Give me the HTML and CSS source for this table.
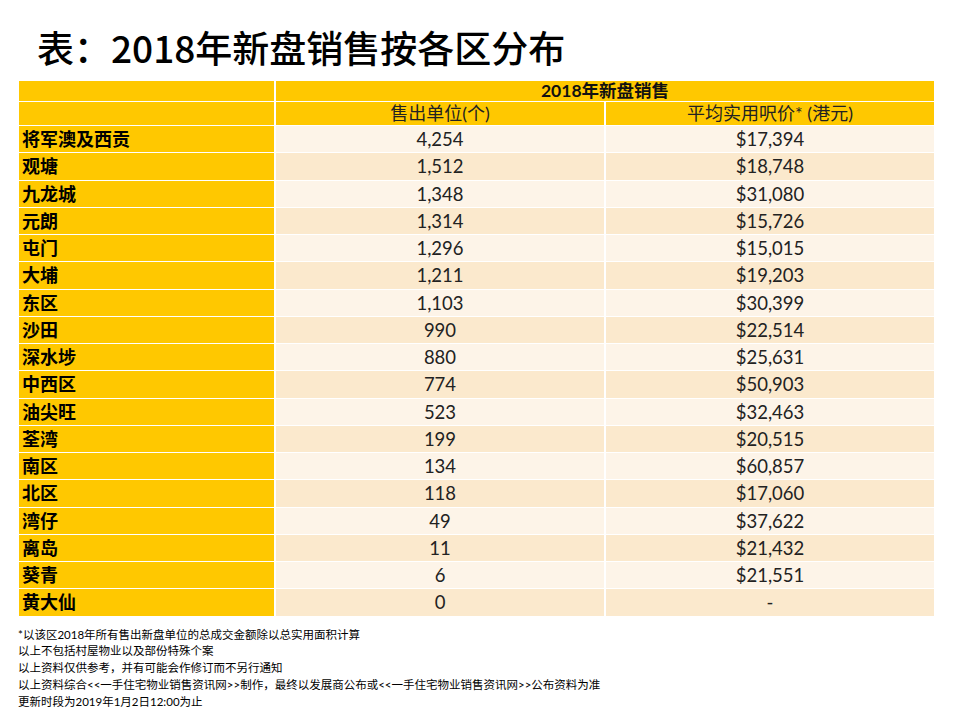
FILE: index.html
```html
<!DOCTYPE html>
<html lang="zh-CN">
<head>
<meta charset="utf-8">
<title>表：2018年新盘销售按各区分布</title>
<link rel="stylesheet" href="styles.css">
</head>
<body>
<div class="page">
  <h1 class="title">表：2018年新盘销售按各区分布</h1>
  <div class="table">
    <div class="hcell"></div>
    <div class="hcell span2 bold">2018年新盘销售</div>
    <div class="hcell"></div>
    <div class="hcell">售出单位(个)</div>
    <div class="hcell">平均实用呎价* (港元)</div>

    <div class="row"><div class="name">将军澳及西贡</div><div class="val">4,254</div><div class="val">$17,394</div></div>
    <div class="row alt"><div class="name">观塘</div><div class="val">1,512</div><div class="val">$18,748</div></div>
    <div class="row"><div class="name">九龙城</div><div class="val">1,348</div><div class="val">$31,080</div></div>
    <div class="row alt"><div class="name">元朗</div><div class="val">1,314</div><div class="val">$15,726</div></div>
    <div class="row"><div class="name">屯门</div><div class="val">1,296</div><div class="val">$15,015</div></div>
    <div class="row alt"><div class="name">大埔</div><div class="val">1,211</div><div class="val">$19,203</div></div>
    <div class="row"><div class="name">东区</div><div class="val">1,103</div><div class="val">$30,399</div></div>
    <div class="row alt"><div class="name">沙田</div><div class="val">990</div><div class="val">$22,514</div></div>
    <div class="row"><div class="name">深水埗</div><div class="val">880</div><div class="val">$25,631</div></div>
    <div class="row alt"><div class="name">中西区</div><div class="val">774</div><div class="val">$50,903</div></div>
    <div class="row"><div class="name">油尖旺</div><div class="val">523</div><div class="val">$32,463</div></div>
    <div class="row alt"><div class="name">荃湾</div><div class="val">199</div><div class="val">$20,515</div></div>
    <div class="row"><div class="name">南区</div><div class="val">134</div><div class="val">$60,857</div></div>
    <div class="row alt"><div class="name">北区</div><div class="val">118</div><div class="val">$17,060</div></div>
    <div class="row"><div class="name">湾仔</div><div class="val">49</div><div class="val">$37,622</div></div>
    <div class="row alt"><div class="name">离岛</div><div class="val">11</div><div class="val">$21,432</div></div>
    <div class="row"><div class="name">葵青</div><div class="val">6</div><div class="val">$21,551</div></div>
    <div class="row alt"><div class="name">黄大仙</div><div class="val">0</div><div class="val">-</div></div>
  </div>
  <div class="notes">
    <p>*以该区2018年所有售出新盘单位的总成交金额除以总实用面积计算</p>
    <p>以上不包括村屋物业以及部份特殊个案</p>
    <p>以上资料仅供参考，并有可能会作修订而不另行通知</p>
    <p>以上资料综合&lt;&lt;一手住宅物业销售资讯网&gt;&gt;制作，最终以发展商公布或&lt;&lt;一手住宅物业销售资讯网&gt;&gt;公布资料为准</p>
    <p>更新时段为2019年1月2日12:00为止</p>
  </div>
</div>
</body>
</html>
```

FILE: styles.css
```css
html, body {
  margin: 0;
  padding: 0;
  background: #ffffff;
}

body {
  font-family: "Noto Sans CJK SC", "Noto Sans", sans-serif;
  color: #000;
}

.page {
  width: 960px;
  height: 720px;
  padding: 25px 0 0 19px;
  box-sizing: border-box;
}

.title {
  margin: 0 0 12px 18px;
  font-size: 37px;
  line-height: 44px;
  font-weight: 500;
  color: #000;
}

.table {
  display: grid;
  grid-template-columns: 255px 328px 328px;
  grid-template-rows: 20px 23px repeat(18, 26.25px);
  column-gap: 2px;
  row-gap: 1px;
  width: 915px;
}

.hcell {
  background: #ffc800;
  font-family: "Lato", "Noto Sans CJK SC", sans-serif;
  font-size: 18px;
  line-height: 23px;
  text-align: center;
  color: #222;
  white-space: nowrap;
}

.hcell.span2 {
  grid-column: span 2;
}

.hcell.bold {
  font-weight: 700;
  font-size: 17.5px;
  line-height: 20px;
  color: #111;
}

.row {
  display: contents;
}

.name {
  background: #ffc800;
  font-family: "Lato", "Noto Sans CJK SC", sans-serif;
  font-weight: 700;
  font-size: 18px;
  line-height: 26px;
  padding-left: 3px;
  color: #000;
  white-space: nowrap;
}

.val {
  background: #fdf4e8;
  font-family: "Lato", "Noto Sans CJK SC", sans-serif;
  font-size: 18.5px;
  line-height: 26px;
  text-align: center;
  color: #222;
}

.row.alt .val {
  background: #fbe9cd;
}

.notes {
  margin-top: 11px;
  margin-left: -1px;
  font-family: "Lato", "Noto Sans CJK SC", sans-serif;
  font-size: 11.5px;
  line-height: 16.8px;
  color: #000;
}

.notes p {
  margin: 0;
  white-space: nowrap;
}
```
